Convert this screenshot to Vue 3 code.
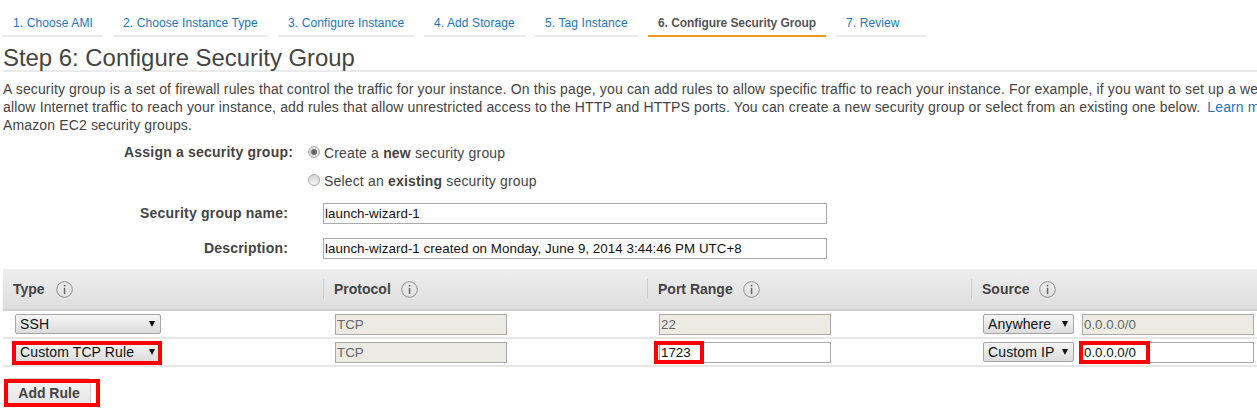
<script setup>
const tabs = [
  { label: '1. Choose AMI', width: 100 },
  { label: '2. Choose Instance Type', width: 155 },
  { label: '3. Configure Instance', width: 136 },
  { label: '4. Add Storage', width: 101 },
  { label: '5. Tag Instance', width: 103 },
  { label: '6. Configure Security Group', width: 178, active: true },
  { label: '7. Review', width: 90 },
]
const columns = ['Type', 'Protocol', 'Port Range', 'Source']
</script>

<template>
  <div class="page">
    <!-- wizard steps -->
    <nav class="tabs">
      <a
        v-for="t in tabs"
        :key="t.label"
        class="tab"
        :class="{ 'tab-active': t.active }"
        :style="{ width: t.width + 'px' }"
      >{{ t.label }}</a>
    </nav>

    <h1 class="title">Step 6: Configure Security Group</h1>

    <div class="intro">
      <div>A security group is a set of firewall rules that control the traffic for your instance. On this page, you can add rules to allow specific traffic to reach your instance. For example, if you want to set up a web server and</div>
      <div>allow Internet traffic to reach your instance, add rules that allow unrestricted access to the HTTP and HTTPS ports. You can create a new security group or select from an existing one below. <a class="link">Learn more</a> about</div>
      <div>Amazon EC2 security groups.</div>
    </div>

    <!-- form -->
    <div class="form">
      <div class="assign">
        <div class="assign-label">Assign a security group:</div>
        <div class="radios">
          <label class="radio-row">
            <span class="radio radio-on"></span>
            <span>Create a <b>new</b> security group</span>
          </label>
          <label class="radio-row">
            <span class="radio"></span>
            <span>Select an <b>existing</b> security group</span>
          </label>
        </div>
      </div>
      <div class="field field-name">
        <div class="field-label">Security group name:</div>
        <input class="text wide" value="launch-wizard-1" />
      </div>
      <div class="field field-desc">
        <div class="field-label">Description:</div>
        <input class="text wide" value="launch-wizard-1 created on Monday, June 9, 2014 3:44:46 PM UTC+8" />
      </div>
    </div>

    <!-- rules table -->
    <div class="rules">
      <div class="head">
        <div v-for="c in columns" :key="c" class="head-cell">
          <span class="head-name">{{ c }}</span>
          <svg class="info" width="17" height="17" viewBox="0 0 17 17">
            <circle cx="8.5" cy="8.5" r="7.8" fill="none" stroke="#8f8f8f" stroke-width="1" />
            <rect x="7.8" y="7" width="1.5" height="6" fill="#666" />
            <rect x="7.8" y="4" width="1.5" height="1.6" fill="#666" />
          </svg>
        </div>
      </div>

      <div class="row">
        <div class="cell cell-type"><div class="select sel-type">SSH<i class="arrow"></i></div></div>
        <div class="cell"><input class="text num ro" value="TCP" readonly /></div>
        <div class="cell"><input class="text num ro" value="22" readonly /></div>
        <div class="cell cell-source">
          <div class="select sel-source">Anywhere<i class="arrow"></i></div>
          <input class="text num ro" value="0.0.0.0/0" readonly />
        </div>
      </div>

      <div class="row">
        <div class="cell cell-type">
          <div class="select sel-type">Custom TCP Rule<i class="arrow"></i></div>
          <span class="mark mark-type"></span>
        </div>
        <div class="cell"><input class="text num ro" value="TCP" readonly /></div>
        <div class="cell">
          <input class="text num" value="1723" />
          <span class="mark mark-port"></span>
        </div>
        <div class="cell cell-source">
          <div class="select sel-source">Custom IP<i class="arrow"></i></div>
          <input class="text num" value="0.0.0.0/0" />
          <span class="mark mark-ip"></span>
        </div>
      </div>
    </div>

    <div class="actions">
      <button class="add">Add Rule</button>
      <span class="mark mark-add"></span>
    </div>
  </div>
</template>

<style>
html, body { margin: 0; background: #fff; overflow: hidden; }
</style>

<style scoped>
.page {
  width: 1257px;
  height: 411px;
  overflow: hidden;
  box-sizing: border-box;
  padding: 10px 0 0 3px;
  font-family: "Liberation Sans", Arial, sans-serif;
  font-size: 14px;
  color: #444;
}

/* steps */
.tabs {
  display: flex;
  gap: 10px;
}
.tab {
  box-sizing: border-box;
  height: 27px;
  padding: 5px 0 0 10px;
  font-size: 12px;
  line-height: 16px;
  letter-spacing: 0.1px;
  color: #1c76c2;
  border-bottom: 2px solid #eaeaea;
  white-space: nowrap;
}
.tab-active {
  color: #555;
  font-weight: bold;
  letter-spacing: -0.07px;
  border-bottom-color: #f7981d;
}

.title {
  margin: 7px 0 0;
  height: 26px;
  font-size: 23.9px;
  line-height: 27px;
  font-weight: normal;
  border-bottom: 2px solid #eaeaea;
  box-sizing: content-box;
  color: #444;
}

.intro {
  margin-top: 8px;
  overflow: hidden;
  white-space: nowrap;
  line-height: 18px;
  letter-spacing: 0.14px;
}
.link { color: #1c76c2; margin-left: 3px; }

/* form */
.form {
  position: relative;
  height: 135px;
}
.assign {
  display: flex;
  padding-top: 10px;
}
.assign-label {
  width: 290px;
  margin-top: -1px;
  text-align: right;
  font-weight: bold;
  line-height: 18px;
  letter-spacing: 0.2px;
}
.radios {
  margin-left: 15px;
  display: flex;
  flex-direction: column;
  gap: 10px;
  letter-spacing: 0.17px;
}
.radio-row {
  display: flex;
  align-items: center;
  gap: 4px;
  height: 18px;
  line-height: 18px;
}
.radio {
  box-sizing: border-box;
  width: 12px;
  height: 12px;
  margin-top: -3px;
  border-radius: 50%;
  border: 1px solid #a8a8a8;
  background: linear-gradient(#d4d4d4, #f6f6f6);
}
.radio-on {
  background: radial-gradient(circle, #666 0 2.5px, #e0e0e0 3.5px);
}
.field {
  display: flex;
  align-items: flex-start;
}
.field-name { margin-top: 13px; }
.field-desc { margin-top: 14px; }
.field-label {
  width: 285px;
  margin-top: 2px;
  text-align: right;
  font-weight: bold;
  line-height: 16px;
  letter-spacing: 0.2px;
}
.text {
  box-sizing: border-box;
  height: 21px;
  padding: 1px 1px;
  border: 1px solid #aaa;
  background: #fff;
  font-family: inherit;
  font-size: 13.33px;
  color: #111;
  outline: none;
}
.wide {
  width: 504px;
  margin-left: 35px;
  letter-spacing: 0.05px;
}

/* rules table */
.rules {
  width: 1254px;
}
.head {
  display: grid;
  grid-template-columns: 320px 324px 324px 1fr;
  height: 42px;
  box-sizing: border-box;
  border-bottom: 2px solid #d0d0d0;
  background: linear-gradient(#eeeeee, #dedede);
}
.head-cell {
  display: flex;
  align-items: center;
  gap: 10px;
  padding-left: 10px;
  position: relative;
  font-size: 14px;
  font-weight: bold;
}
.head-cell:first-child { gap: 11px; }
.head-cell + .head-cell::before {
  content: '';
  position: absolute;
  left: 0;
  top: 10px;
  height: 20px;
  width: 1px;
  background: #ccc;
}
.head-cell:nth-child(2),
.head-cell:nth-child(3),
.head-cell:nth-child(4) { padding-left: 11px; }
.info { flex: none; }

.row {
  display: grid;
  grid-template-columns: 320px 324px 324px 1fr;
  height: 28px;
  box-sizing: border-box;
  border-bottom: 2px solid #e6e6e6;
  padding-top: 3px;
}
.cell {
  position: relative;
  padding-left: 12px;
}
.cell-source {
  display: flex;
  gap: 8px;
}
.select {
  box-sizing: border-box;
  position: relative;
  height: 20px;
  padding-left: 4px;
  line-height: 18px;
  font-size: 14px;
  letter-spacing: 0.12px;
  color: #111;
  border: 1px solid #a5a5a5;
  border-radius: 2px;
  background: linear-gradient(#f6f6f6, #dcdcdc);
}
.sel-type { width: 146px; }
.sel-source { width: 91px; flex: none; }
.arrow {
  position: absolute;
  right: 5px;
  top: 6px;
  width: 0;
  height: 0;
  border-left: 3px solid transparent;
  border-right: 3px solid transparent;
  border-top: 6px solid #111;
}
.num {
  width: 172px;
  flex: none;
}
.ro {
  background: #ebebe4;
  color: #666;
}

/* red highlights on the screenshot */
.mark {
  position: absolute;
  box-sizing: border-box;
  border: 4px solid #ff0000;
  pointer-events: none;
}
.mark-type { left: 9px; top: -1px; width: 150px; height: 24px; }
.mark-port { left: 7px; top: -1px; width: 50px; height: 23px; }
.mark-ip { left: 108px; top: -1px; width: 71px; height: 23px; }
.mark-add { left: 1px; top: 1px; width: 96px; height: 28px; }

.actions {
  position: relative;
  margin-top: 11px;
}
.add {
  box-sizing: border-box;
  display: block;
  margin-left: 4px;
  width: 84px;
  height: 29px;
  border: 1px solid #ccc;
  border-radius: 3px;
  background: linear-gradient(#f4f4f4, #e4e4e4);
  font-family: inherit;
  font-size: 14px;
  font-weight: bold;
  color: #444;
}
</style>
